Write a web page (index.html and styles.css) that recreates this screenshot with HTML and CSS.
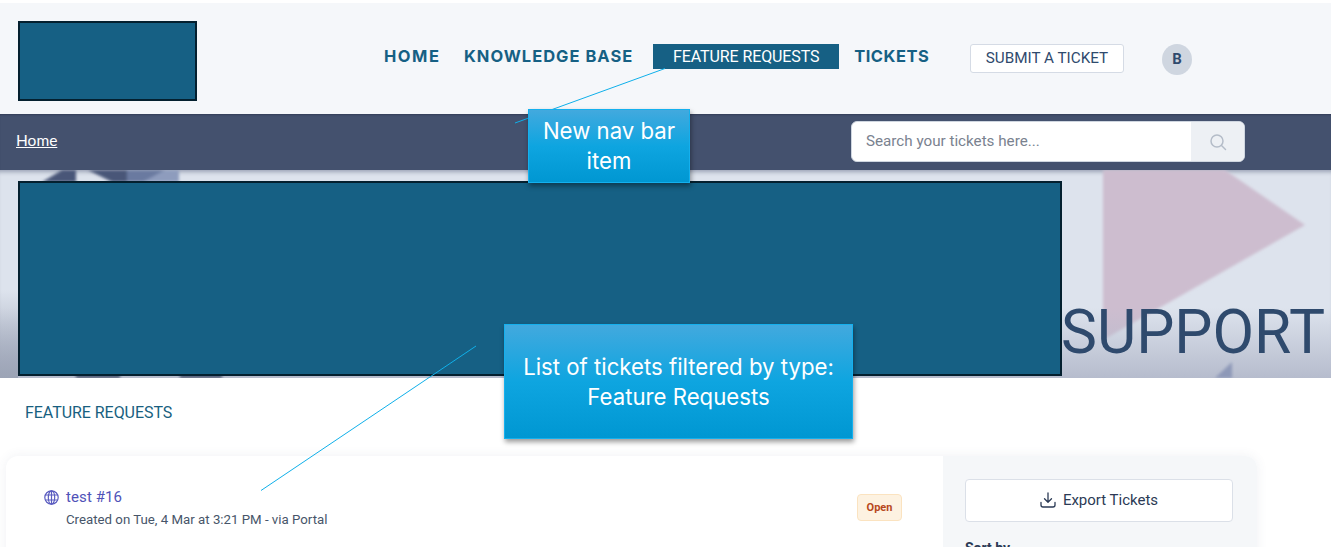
FILE: index.html
```html
<!DOCTYPE html>
<html lang="en">
<head>
<meta charset="utf-8">
<title>Support</title>
<link rel="stylesheet" href="styles.css">
</head>
<body>
<div class="page">
  <header class="topbar">
    <div class="redaction logo"></div>
    <nav class="nav">
      <a class="nav-link nav-home">HOME</a>
      <a class="nav-link nav-kb">KNOWLEDGE BASE</a>
      <a class="nav-active">FEATURE REQUESTS</a>
      <a class="nav-link nav-tickets">TICKETS</a>
    </nav>
    <a class="submit">SUBMIT A TICKET</a>
    <div class="avatar">B</div>
  </header>
  <div class="crumbs">
    <a class="crumb">Home</a>
    <div class="search">
      <span class="search-text">Search your tickets here...</span>
      <span class="search-btn">
        <svg width="18" height="18" viewBox="0 0 18 18" fill="none" stroke="#b4bcc8" stroke-width="1.5" stroke-linecap="round"><circle cx="8" cy="8" r="6"/><path d="M12.5 12.5L16.5 16.5"/></svg>
      </span>
    </div>
  </div>
  <section class="hero">
    <svg class="hero-art" width="1331" height="208" viewBox="0 0 1331 208">
      <defs>
        <filter id="soft" x="-10%" y="-10%" width="120%" height="120%"><feGaussianBlur stdDeviation="1.5"/></filter>
        <linearGradient id="fade" x1="0" y1="0" x2="0" y2="1">
          <stop offset="0" stop-color="#b6bccd" stop-opacity="0"/>
          <stop offset="1" stop-color="#b6bccd" stop-opacity="1"/>
        </linearGradient>
        <linearGradient id="fadeleft" x1="0" y1="0" x2="0" y2="1">
          <stop offset="0" stop-color="#9ca4b6" stop-opacity="0"/>
          <stop offset="1" stop-color="#9ca4b6" stop-opacity="1"/>
        </linearGradient>
      </defs>
      <g filter="url(#soft)">
        <path d="M42 12L62 0H76V12Z" fill="#4a5678"/>
        <path d="M88 0H127V12H112Z" fill="#4a5678"/>
        <rect x="127" y="0" width="52" height="12" fill="#8e9cbd"/>
        <path d="M143 12L165 0H127V12Z" fill="#6a7aa0"/>
        <path d="M1103 0H1225L1305 55L1103 170Z" fill="#cdbdcf"/>
      </g>
      <rect x="0" y="138" width="1331" height="70" fill="url(#fade)"/>
      <rect x="0" y="120" width="18" height="88" fill="url(#fadeleft)"/>
      <g filter="url(#soft)">
        <path d="M1215 208L1232 192V208Z" fill="#8e99b8"/>
        <rect x="76" y="205" width="44" height="3" fill="#3b4663"/>
        <rect x="180" y="205" width="42" height="3" fill="#3b4663"/>
      </g>
    </svg>
    <div class="redaction banner"></div>
    <h1 class="support">SUPPORT</h1>
  </section>
  <main class="content">
    <h2 class="section-title">FEATURE REQUESTS</h2>
    <div class="card">
      <div class="ticket">
        <div class="ticket-main">
          <div class="ticket-title">
            <svg class="globe" width="15" height="15" viewBox="0 0 15 15" fill="none" stroke="#5a5cc0" stroke-width="1.2"><circle cx="7.500" cy="7.500" r="6.700"/><ellipse cx="7.500" cy="7.500" rx="3.200" ry="6.700"/><path d="M7.500 .8V14.200M1.200 5H13.800M1.200 10H13.800"/></svg>
            <a class="ticket-link">test #16</a>
          </div>
          <p class="ticket-meta">Created on Tue, 4 Mar at 3:21 PM - via Portal</p>
        </div>
        <span class="badge">Open</span>
      </div>
      <aside class="side">
        <a class="export">
          <svg width="16" height="16" viewBox="0 0 16 16" fill="none" stroke="#2b3a55" stroke-width="1.300" stroke-linecap="round" stroke-linejoin="round"><path d="M8 1V10M4.500 6.700L8 10.200L11.500 6.700"/><path d="M1 10.500V13A2 2 0 0 0 3 15H13A2 2 0 0 0 15 13V10.500"/></svg>
          Export Tickets
        </a>
        <div class="sort">Sort by</div>
      </aside>
    </div>
  </main>
  <svg class="leaders" width="1331" height="547" viewBox="0 0 1331 547">
    <path d="M665 68.500L515 123" />
    <path d="M476 346L261 490.500" />
  </svg>
  <div class="note note-nav">New nav bar item</div>
  <div class="note note-list">List of tickets filtered by type:<br>Feature Requests</div>
</div>
</body>
</html>
```
FILE: styles.css
```css
* { box-sizing: border-box; }
html, body { margin: 0; padding: 0; background: #fff; }
.page { position: relative; width: 1331px; height: 547px; overflow: hidden; font-family: Roboto, sans-serif; padding-top: 3px; }

.redaction { background: #166084; border: 2px solid #04202f; }

.topbar { display: flex; align-items: flex-start; height: 111px; background: #f5f7fa; padding: 18px 0 0 18px; }
.logo { width: 179px; height: 80px; flex: none; }
.nav { display: flex; align-items: center; margin: 23px 0 0 187px; height: 25px; width: 545px; }
.nav-link { font-family: Inter, sans-serif; font-weight: 700; font-size: 16.500px; letter-spacing: 1px; line-height: 23px; color: #166084; white-space: nowrap; }
.nav-home { margin-right: 23.500px; letter-spacing: 1.500px; }
.nav-kb { margin-right: 20px; }
.nav-tickets { letter-spacing: .5px; margin-top: -1px; }
.nav-active { background: #166084; color: #fff; font-size: 16px; letter-spacing: -.1px; height: 25px; line-height: 25px; width: 186px; flex: none; text-align: center; white-space: nowrap; margin-right: 15px; }
.submit { margin: 23px 0 0 41px; width: 154px; height: 29px; flex: none; line-height: 27px; text-align: center; background: #fff; border: 1px solid #d5dbe5; border-radius: 3px; font-size: 15.250px; color: #2f4a6d; }
.avatar { margin: 23px 0 0 38px; width: 30px; height: 31px; flex: none; border-radius: 50%; background: #cfd6e0; color: #2f4a6d; font-weight: 700; font-size: 15px; line-height: 31px; text-align: center; }

.crumbs { display: flex; align-items: center; height: 56px; background: #44516e; padding: 0 0 0 16px; box-shadow: inset 0 2px 2px -1px #333d57; }
.crumb { font-family: "Lato", sans-serif; font-size: 15.500px; line-height: 20px; margin-bottom: 4px; width: 41px; color: #fff; text-decoration: underline; }
.search { display: flex; margin: 0 0 1px 794px; width: 394px; height: 41px; background: #fff; border: 1px solid #cfd6e0; border-radius: 6px; overflow: hidden; }
.search-text { flex: 1; padding-left: 14px; font-size: 15.200px; line-height: 39px; color: #7a828f; }
.search-btn { display: flex; align-items: center; justify-content: center; width: 53px; background: #edf0f4; }

.hero { position: relative; display: flex; height: 208px; background: #dde3ed; padding: 11px 0 0 18px; box-shadow: inset 0 5px 4px -3px #9aa2b4; }
.hero-art { position: absolute; left: 0; top: 0; }
.banner { position: relative; width: 1044px; height: 195px; flex: none; }
.support { position: relative; margin: 117px 0 0 -1px; font-size: 60.500px; font-weight: 400; line-height: 70px; color: #2f4a6d; }

.section-title { margin: 0; padding: 26px 0 0 25px; font-size: 16px; letter-spacing: -.05px; font-weight: 400; line-height: 18px; color: #185f80; }
.card { display: flex; margin: 34px 0 0 6px; width: 1251px; height: 200px; background: #fff; border-radius: 12px; box-shadow: 0 0 12px rgba(60, 80, 110, .08); overflow: hidden; }
.ticket { display: flex; align-items: flex-start; width: 937px; padding: 32px 41px 0 38px; }
.ticket-main { flex: 1; }
.ticket-title { display: flex; align-items: center; gap: 7px; }
.ticket-link { font-size: 15px; line-height: 18px; color: #4f52b8; letter-spacing: .1px; }
.ticket-meta { margin: 6px 0 0 22px; font-size: 13.250px; line-height: 16px; color: #475569; }
.badge { margin-top: 6px; width: 45px; height: 27px; line-height: 25px; text-align: center; font-size: 11px; font-weight: 700; color: #b8481c; background: #fdf2e1; border: 1px solid #fbe3c0; border-radius: 4px; }
.side { flex: 1; background: #f5f7f9; padding: 23px 24px 0 22px; }
.export { display: flex; align-items: center; justify-content: center; gap: 7px; height: 43px; padding-bottom: 2px; background: #fff; border: 1px solid #dbe0e8; border-radius: 4px; font-size: 15px; color: #2b3a55; }
.sort { margin-top: 18px; font-size: 14px; font-weight: 700; color: #2b3a55; }

.leaders { position: absolute; left: 0; top: 0; pointer-events: none; }
.leaders path { stroke: #0fb0ea; stroke-width: 1; fill: none; }
.note { position: absolute; display: flex; align-items: center; justify-content: center; text-align: center; color: #fff; font-family: Inter, sans-serif; font-size: 22.200px; line-height: 30px; background: linear-gradient(#42a9de 0%, #0ea5e0 50%, #0097d2 100%); border: 1px solid #14b0ee; box-shadow: 1px 3px 5px rgba(0, 0, 0, .4); }
.note-nav { left: 528px; top: 109px; width: 162px; height: 74px; padding: 0 12px; }
.note-list { left: 504px; top: 324px; width: 349px; height: 115px; }
```
